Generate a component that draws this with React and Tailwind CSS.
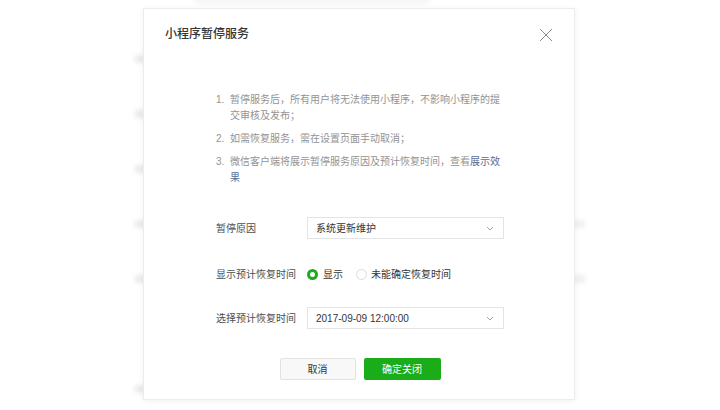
import React from 'react';

const font = { fontFamily: '"Liberation Sans", "Noto Sans CJK SC", sans-serif' };

// faint blurred rows of the page behind the dialog
const bgRows = [
  { left: true, right: false },
  { left: true, right: false },
  { left: true, right: false },
  { left: true, right: true },
  { left: true, right: true },
  { left: false, right: false },
  { left: true, right: false },
];

const Chevron = () => (
  <svg width="8" height="5" viewBox="0 0 8 5" className="shrink-0">
    <path d="M1 1 L4 4 L7 1" fill="none" stroke="#a3a3a3" strokeWidth="1" />
  </svg>
);

const Select = ({ value }) => (
  <div className="flex h-[22px] w-[197px] items-center justify-between border border-[#e4e4e4] bg-white pl-[8px] pr-[9px] text-[10px] text-[#353535]">
    <span>{value}</span>
    <Chevron />
  </div>
);

const App = () => {
  return (
    <div className="relative h-[410px] w-[720px] overflow-hidden bg-white" style={font}>
      {/* background page */}
      <div className="mx-auto w-[450px] blur-[2px]">
        <div className="ml-[60px] mt-[-1px] h-[4px] w-[235px] bg-[#f1f1f1]" />
        <div className="pt-[52px]">
          {bgRows.map((r, i) => (
            <div key={i} className="flex h-[55px] justify-between">
              <div className={r.left ? 'h-[8px] w-[30px] bg-[#ebebeb]' : 'h-[8px] w-[30px]'} />
              <div className={r.right ? 'h-[8px] w-[30px] bg-[#f0f0f0]' : 'h-[8px] w-[30px]'} />
            </div>
          ))}
        </div>
      </div>

      {/* dialog */}
      <div className="absolute left-[143px] top-[8px] h-[392px] w-[432px] border border-[#ececec] bg-white shadow-[0_1px_6px_rgba(0,0,0,0.06)]">
        <div className="flex items-start justify-between pl-[21px] pr-[21px] pt-[17px]">
          <h1 className="text-[12px] font-medium leading-[16px] text-[#353535]">小程序暂停服务</h1>
          <svg width="14" height="14" viewBox="0 0 14 14" className="mt-[2px]">
            <path d="M1 1 L13 13 M13 1 L1 13" stroke="#8c8c8c" strokeWidth="1" fill="none" />
          </svg>
        </div>

        <ol className="ml-[72px] mt-[50px] w-[290px] space-y-[7px] text-[10px] leading-[16px] text-[#939393]">
          <li className="flex">
            <span className="w-[14px] shrink-0">1.</span>
            <span className="w-[274px]">暂停服务后，所有用户将无法使用小程序，不影响小程序的提交审核及发布；</span>
          </li>
          <li className="flex">
            <span className="w-[14px] shrink-0">2.</span>
            <span className="w-[274px]">如需恢复服务，需在设置页面手动取消；</span>
          </li>
          <li className="flex">
            <span className="w-[14px] shrink-0">3.</span>
            <p className="w-[274px]">
              微信客户端将展示暂停服务原因及预计恢复时间，查看<a className="text-[#576b95]">展示效果</a>
            </p>
          </li>
        </ol>

        <div className="ml-[72px] mt-[31px] text-[10px] text-[#4d4d4d]">
          <div className="flex items-center">
            <span className="w-[91px]">暂停原因</span>
            <Select value="系统更新维护" />
          </div>

          <div className="mt-[24px] flex h-[22px] items-center">
            <span className="w-[91px]">显示预计恢复时间</span>
            <span className="h-[11px] w-[11px] rounded-full border-[3px] border-[#1aad19] bg-white" />
            <span className="ml-[5px] text-[#353535]">显示</span>
            <span className="ml-[13px] h-[11px] w-[11px] rounded-full border border-[#dcdcdc] bg-white" />
            <span className="ml-[4px] text-[#353535]">未能确定恢复时间</span>
          </div>

          <div className="mt-[22px] flex items-center">
            <span className="w-[91px]">选择预计恢复时间</span>
            <Select value="2017-09-09 12:00:00" />
          </div>
        </div>

        <div className="mt-[29px] flex justify-center gap-[8px]">
          <button className="ml-[2px] flex h-[22px] w-[76px] items-center justify-center rounded-[2px] border border-[#e2e2e2] bg-[#f8f8f8] text-[10px] text-[#353535]">
            取消
          </button>
          <button className="flex h-[22px] w-[77px] items-center justify-center rounded-[2px] bg-[#1aad19] text-[10px] text-white">
            确定关闭
          </button>
        </div>
      </div>
    </div>
  );
};

export default App;
